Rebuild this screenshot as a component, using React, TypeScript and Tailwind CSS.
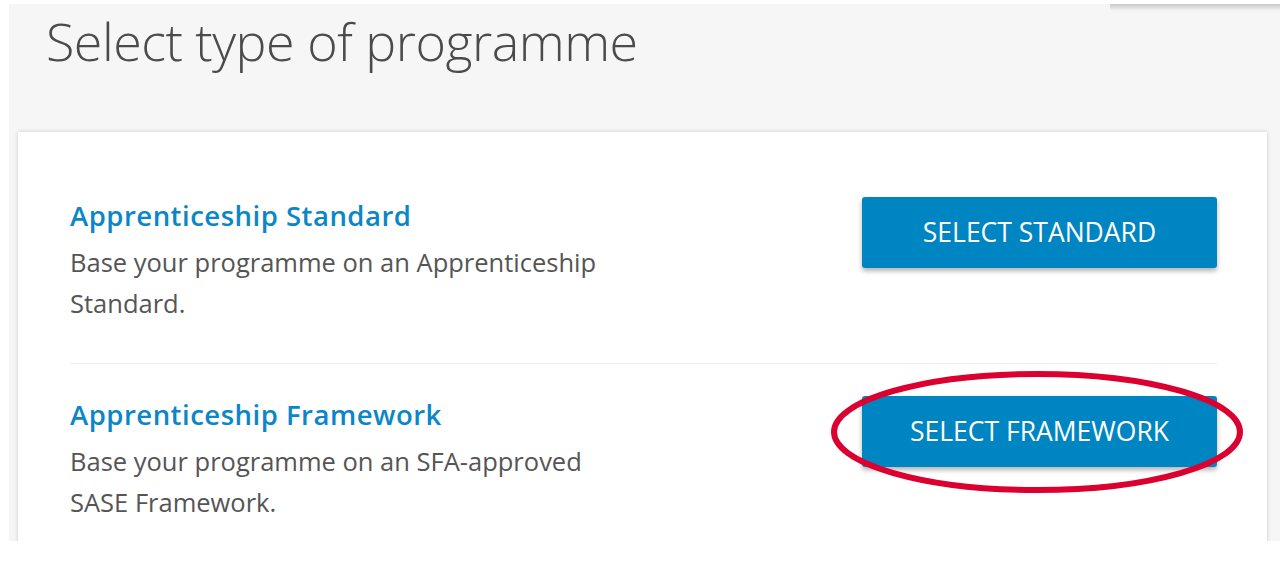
import React from "react";

const options = [
  {
    title: "Apprenticeship Standard",
    lines: ["Base your programme on an Apprenticeship", "Standard."],
    button: "SELECT STANDARD",
  },
  {
    title: "Apprenticeship Framework",
    lines: ["Base your programme on an SFA-approved", "SASE Framework."],
    button: "SELECT FRAMEWORK",
  },
];

export default function App() {
  return (
    <div
      className="relative w-[1286px] h-[562px] overflow-hidden bg-white"
      style={{ fontFamily: '"Open Sans", "Noto Sans", sans-serif' }}
    >
      <div className="relative ml-[9px] mr-[6px] mt-[4px] h-[537px] overflow-hidden bg-[#f6f6f6]">
        {/* shadow of a menu above the crop */}
        <div className="absolute right-0 top-0 w-[170px] h-[7px] bg-gradient-to-b from-[#c8c8c8] to-[#f6f6f6]" />

        <h1 className="pl-[37px] pt-[5px] text-[52px] leading-[64px] font-light text-[#4b4b4b] tracking-[-0.5px]">
          Select type of programme
        </h1>

        <div className="ml-[9px] mr-[13px] mt-[59px] bg-white shadow-[0_0_4px_rgba(0,0,0,0.18)] pl-[52px] pr-[50px] pt-[65px] pb-[40px]">
          {options.map((o, i) => (
            <div key={o.title}>
              {i > 0 && <div className="h-px bg-[#eeeeee]" />}
              <div className={`flex items-start justify-between ${i > 0 ? "pt-[32px]" : ""} pb-[39px]`}>
                <div>
                  <h2 className="text-[27.5px] leading-[38px] font-semibold text-[#0b86c6] tracking-[0.5px]">{o.title}</h2>
                  <p className="mt-[7px] text-[25.5px] leading-[41px] text-[#555555]">
                    {o.lines[0]}
                    <br />
                    {o.lines[1]}
                  </p>
                </div>
                <button className="w-[355px] h-[71px] rounded-[3px] bg-[#0085c3] text-white text-[26.5px] shadow-[0_3px_5px_rgba(0,0,0,0.3)]">
                  {o.button}
                </button>
              </div>
            </div>
          ))}
        </div>
      </div>

      <svg className="absolute left-0 top-0 pointer-events-none" width="1286" height="562">
        <ellipse cx="1037" cy="432" rx="203" ry="58" fill="none" stroke="#db0030" strokeWidth="6" />
      </svg>
    </div>
  );
}
